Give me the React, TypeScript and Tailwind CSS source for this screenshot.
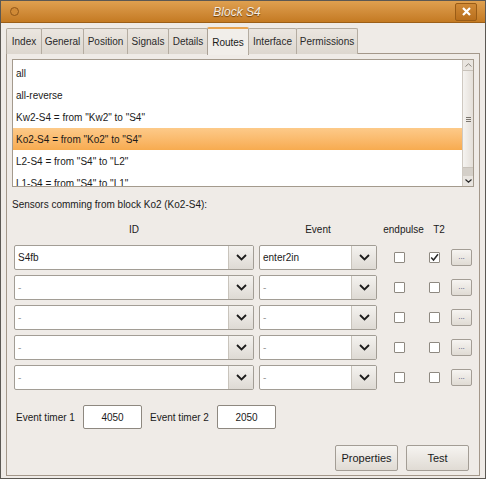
import React from "react";

const font = { fontFamily: '"Liberation Sans", Arial, sans-serif' };

const tabs = ["Index", "General", "Position", "Signals", "Details", "Routes", "Interface", "Permissions"];
const tabWidths = [36, 43, 45, 42, 40, 42, 49, 62];

const routes = [
  "all",
  "all-reverse",
  'Kw2-S4 = from "Kw2" to "S4"',
  'Ko2-S4 = from "Ko2" to "S4"',
  'L2-S4 = from "S4" to "L2"',
  'L1-S4 = from "S4" to "L1"',
];

const sensors = [
  { id: "S4fb", event: "enter2in", endpulse: false, t2: true },
  { id: "-", event: "-", endpulse: false, t2: false },
  { id: "-", event: "-", endpulse: false, t2: false },
  { id: "-", event: "-", endpulse: false, t2: false },
  { id: "-", event: "-", endpulse: false, t2: false },
];

function Chevron() {
  return (
    <svg width="11" height="7" viewBox="0 0 11 7">
      <path d="M1 1 L5.5 5.5 L10 1" fill="none" stroke="#1c1c1c" strokeWidth="1.8" />
    </svg>
  );
}

function Combo({ value, width }: { value: string; width: number }) {
  const placeholder = value === "-";
  return (
    <div
      className="flex h-[25px] rounded-[2px] border border-[#a29d95] bg-white overflow-hidden"
      style={{ width }}
    >
      <div
        className={`flex-1 flex items-center pl-[3px] text-[10px] ${
          placeholder ? "text-[#9a9a9a]" : "text-[#1a1a1a]"
        }`}
      >
        {value}
      </div>
      <div className="w-[25px] flex items-center justify-center border-l border-[#c9c4bc] bg-gradient-to-b from-[#f4f2ef] to-[#dedad4]">
        <Chevron />
      </div>
    </div>
  );
}

function Check({ checked }: { checked: boolean }) {
  return (
    <div className="w-[11px] h-[11px] border border-[#8e8981] bg-white rounded-[1px] flex items-center justify-center">
      {checked && (
        <svg width="9" height="9" viewBox="0 0 9 9">
          <path d="M1.2 4.6 L3.5 7 L8 1.2" fill="none" stroke="#2a2a2a" strokeWidth="1.5" />
        </svg>
      )}
    </div>
  );
}

function Button({ label }: { label: string }) {
  return (
    <div className="w-[63px] h-[26px] rounded-[2px] border border-[#a39d95] bg-gradient-to-b from-[#f6f4f1] to-[#e0dbd4] flex items-center justify-center text-[11px] text-[#1a1a1a]">
      {label}
    </div>
  );
}

export default function App() {
  return (
    <div
      className="w-[486px] h-[479px] bg-[#efebe7] border border-[#5b5853] flex flex-col overflow-hidden"
      style={font}
    >
      {/* title bar */}
      <div className="h-[22px] shrink-0 bg-gradient-to-b from-[#dfa04f] to-[#c47a22] border-b border-[#9c5f18] flex items-center px-[8px] relative">
        <div className="w-[9px] h-[9px] rounded-full border border-[#8f5618] bg-[#d08a36] ml-[1px]" />
        <div className="flex-1 text-center italic text-[12px] text-[#f4ece2] [text-shadow:0_1px_1px_#6b3f0c]">
          Block S4
        </div>
        <div className="w-[22px] h-[18px] rounded-[2px] border border-[#9a5c16] bg-gradient-to-b from-[#d08a36] to-[#b96f1c] flex items-center justify-center">
          <svg width="9" height="9" viewBox="0 0 9 9">
            <path d="M1 1 L8 8 M8 1 L1 8" stroke="#ffffff" strokeWidth="2.2" />
          </svg>
        </div>
      </div>

      {/* notebook */}
      <div className="flex-1 flex flex-col px-[5px] pt-[4px] pb-[2px]">
        <div className="flex items-end h-[27px] -mb-px relative z-10">
          {tabs.map((t, i) => {
            const active = t === "Routes";
            return (
              <div
                key={t}
                style={{ width: tabWidths[i] }}
                className={
                  active
                    ? "h-[28px] -mb-px border border-b-0 border-[#aaa196] border-t-[2px] border-t-[#e8a451] bg-[#f1eeea] rounded-t-[2px] flex items-center justify-center text-[10px] text-[#1a1a1a] -mr-px"
                    : "h-[26px] border border-b-0 border-[#b4aca1] bg-gradient-to-b from-[#ebe6e0] to-[#ddd7cf] rounded-t-[2px] flex items-center justify-center text-[10px] text-[#2a2a2a] -mr-px"
                }
              >
                {t}
              </div>
            );
          })}
        </div>

        <div className="flex-1 border border-[#a3978a] bg-[#efebe7] px-[5px] pt-[5px] flex flex-col">
          {/* route list */}
          <div className="h-[128px] border border-[#a49a8d] bg-white flex overflow-hidden">
            <div className="flex-1 pt-[2px] overflow-hidden">
              {routes.map((r) => {
                const sel = r.startsWith("Ko2");
                return (
                  <div
                    key={r}
                    className={`h-[22px] shrink-0 flex items-center pl-[3px] text-[10px] text-[#1a1a1a] ${
                      sel ? "bg-gradient-to-b from-[#fdca89] to-[#f7ab4f]" : ""
                    }`}
                  >
                    {r}
                  </div>
                );
              })}
            </div>
            <div className="w-[11px] flex flex-col border-l border-[#cfc9c1] bg-[#e9e5e0]">
              <div className="h-[10px] flex items-center justify-center">
                <svg width="7" height="4" viewBox="0 0 7 4">
                  <path d="M0.5 3.5 L3.5 0.8 L6.5 3.5" fill="none" stroke="#8c877f" strokeWidth="1" />
                </svg>
              </div>
              <div className="h-[98px] border-y border-[#c8c2ba] bg-gradient-to-r from-[#f5f3f0] to-[#e4dfd9] flex items-center justify-center">
                <div className="flex flex-col gap-[1px]">
                  <div className="w-[5px] h-px bg-[#7b766f]" />
                  <div className="w-[5px] h-px bg-[#7b766f]" />
                  <div className="w-[5px] h-px bg-[#7b766f]" />
                </div>
              </div>
              <div className="h-[8px] bg-[#d4cfc8]" />
              <div className="flex-1 flex items-center justify-center">
                <svg width="7" height="4" viewBox="0 0 7 4">
                  <path d="M0.5 0.5 L3.5 3.2 L6.5 0.5" fill="none" stroke="#2a2a2a" strokeWidth="1.2" />
                </svg>
              </div>
            </div>
          </div>

          <div className="mt-[11px] text-[10px] text-[#1a1a1a] leading-[13px]">
            Sensors comming from block Ko2 (Ko2-S4):
          </div>

          {/* headers */}
          <div className="flex mt-[12px] h-[13px] items-center text-[10px] text-[#1a1a1a] ml-[2px]">
            <div className="w-[240px] text-center">ID</div>
            <div className="w-[118px] ml-[5px] text-center">Event</div>
            <div className="w-[43px] ml-[5px] text-center">endpulse</div>
            <div className="w-[22px] ml-[3px] text-center">T2</div>
          </div>

          {/* sensor rows */}
          <div className="flex flex-col gap-[5px] mt-[9px] ml-[2px]">
            {sensors.map((s, i) => (
              <div key={i} className="flex items-center h-[25px]">
                <Combo value={s.id} width={240} />
                <div className="ml-[5px]">
                  <Combo value={s.event} width={118} />
                </div>
                <div className="ml-[17px]">
                  <Check checked={s.endpulse} />
                </div>
                <div className="ml-[24px]">
                  <Check checked={s.t2} />
                </div>
                <div className="ml-[11px] w-[21px] h-[17px] rounded-[2px] border border-[#a39d95] bg-gradient-to-b from-[#f6f4f1] to-[#e0dbd4] flex items-center justify-center text-[8px] text-[#3a4a7a] leading-none pb-[2px]">
                  ...
                </div>
              </div>
            ))}
          </div>

          {/* timers */}
          <div className="flex items-center mt-[15px] ml-[4px] text-[10px] text-[#1a1a1a]">
            <div className="w-[67px]">Event timer 1</div>
            <div className="w-[59px] h-[24px] border border-[#8e8880] rounded-[2px] bg-white flex items-center justify-center">
              4050
            </div>
            <div className="ml-[8px] w-[67px]">Event timer 2</div>
            <div className="w-[59px] h-[24px] border border-[#8e8880] rounded-[2px] bg-white flex items-center justify-center">
              2050
            </div>
          </div>

          <div className="flex justify-end gap-[8px] mt-[16px] mr-[5px]">
            <Button label="Properties" />
            <Button label="Test" />
          </div>
        </div>
      </div>
    </div>
  );
}
